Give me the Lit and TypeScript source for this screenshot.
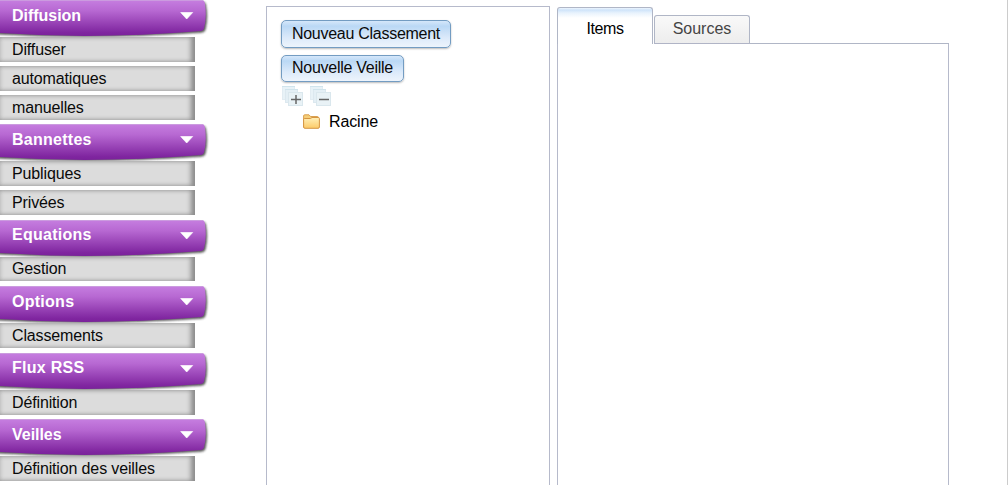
import { LitElement, html, css, svg } from "lit";
import { customElement } from "lit/decorators.js";
import { classMap } from "lit/directives/class-map.js";

interface Section {
  title: string;
  items: string[];
  gap: number;
  raised?: boolean;
  tight?: boolean;
}

const SECTIONS: Section[] = [
  { title: "Diffusion", items: ["Diffuser", "automatiques", "manuelles"], gap: 4, tight: true },
  { title: "Bannettes", items: ["Publiques", "Privées"], gap: 5 },
  { title: "Equations", items: ["Gestion"], gap: 5, raised: true },
  { title: "Options", items: ["Classements"], gap: 5 },
  { title: "Flux RSS", items: ["Définition"], gap: 4, raised: true },
  { title: "Veilles", items: ["Définition des veilles"], gap: 4, tight: true },
];

@customElement("side-menu")
export class SideMenu extends LitElement {
  static styles = css`
    :host { display: block; width: 210px; }
    .head { display: grid; height: 37px; }
    .head > * { grid-area: 1 / 1; }
    .banner { display: block; width: 210px; height: 40px; }
    .title { z-index: 2; padding-left: 12px; font-weight: bold; line-height: 18px; margin-top: 7px; color: #fff; letter-spacing: .27px; }
    .tight .title { letter-spacing: -.03px; }
    .raised .title { margin-top: 6px; }
    .list { display: flex; flex-direction: column; gap: 4px; }
    .item {
      box-sizing: border-box; width: 195px; height: 25px; padding-left: 12px; line-height: 25px;
      background: #dcdcdc; color: #0a0a0a; letter-spacing: -.14px;
      box-shadow: inset -5px 0 5px -1px #8c8c8c, inset 0 0 4px #aaa;
    }
    .short .item { height: 24px; line-height: 23px; }
  `;

  private banner() {
    return svg`<svg class="banner" viewBox="0 0 210 40">
      <defs>
        <linearGradient id="g" x1="0" y1="0" x2="0" y2="1">
          <stop offset="0" stop-color="#c67ee0"></stop>
          <stop offset=".3" stop-color="#b768d2"></stop>
          <stop offset=".9" stop-color="#8026a0"></stop>
          <stop offset="1" stop-color="#7a219b"></stop>
        </linearGradient>
        <filter id="b" x="-5%" y="-20%" width="110%" height="140%"><feGaussianBlur stdDeviation="1"></feGaussianBlur></filter>
      </defs>
      <path d="M-6 2H203Q205.500 2 206 5Q208.500 18 205.500 30Q204.500 32.500 201 32.700Q96 40 -6 34.300Z" fill="#222" opacity=".75" filter="url(#b)"></path>
      <path d="M-1 0H202Q204.500 0 205 4Q207 17 204 28.500Q203.500 30.500 201 31Q96 39.700 -1 33Z" fill="url(#g)"></path>
      <path d="M0 .5H203" stroke="#cb9bdf" fill="none"></path>
      <path d="M180.700 12.500H192.700L186.700 19Z" fill="#fff" stroke="#fff" stroke-opacity=".65" stroke-linejoin="round"></path>
    </svg>`;
  }

  render() {
    return SECTIONS.map(
      (s) => html`<section class=${classMap({ raised: !!s.raised, tight: !!s.tight, short: s.title === "Equations" })}>
        <div class="head">${this.banner()}<span class="title">${s.title}</span></div>
        <div class="list">${s.items.map((i) => html`<div class="item">${i}</div>`)}</div>
        <div style="height:${s.gap}px"></div>
      </section>`,
    );
  }
}

@customElement("watch-tree")
export class WatchTree extends LitElement {
  static styles = css`
    :host {
      display: flex; flex-direction: column; align-items: flex-start; box-sizing: border-box;
      width: 284px; height: 520px; padding: 13px 14px 0; border: 1px solid #b6bacb;
    }
    button {
      box-sizing: border-box; height: 28px; padding: 0; width: 170px; flex: none;
      border: 1px solid #739cc2; border-radius: 5px; font: inherit; color: #0a0a0a; letter-spacing: -.27px;
      background: linear-gradient(#d5e7fa 0, #bad8f5 20%, #dceafa 65%, #edf4fc);
      box-shadow: 0 1px 2px #bbb; white-space: nowrap;
    }
    .second { width: 123px; height: 27px; margin-top: 7px; padding-bottom: 1px; }
    .tools { display: flex; gap: 6px; margin: 4px 0 0 1px; height: 20px; }
    .tools svg { width: 22px; height: 20px; }
    .node { display: flex; margin: 5px 0 0 22px; gap: 9px; line-height: 22px; letter-spacing: -.15px; }
    .folder { width: 17px; height: 16px; margin-top: 3px; }
  `;

  private stack(plus: boolean) {
    return html`<svg viewBox="0 0 22 20">
      <rect x=".5" y=".5" width="12" height="13" fill="#e8f2f7" stroke="#e2ecf2"></rect>
      <path d="M0 .5H13" stroke="#d0e4ec"></path>
      <rect x="3.500" y="3.500" width="12" height="13" fill="#e4eff5" stroke="#dce8ef"></rect>
      <path d="M3 3.500H16" stroke="#d0e4ec"></path>
      <rect x="6.500" y="6.500" width="14" height="13" fill="#e9f2f6" stroke="#dae7ed"></rect>
      <path d="M9 13.500H19" stroke="#666" stroke-width="1.500"></path>
      ${plus ? svg`<path d="M14 9V18" stroke="#666" stroke-width="1.500"></path>` : ""}
    </svg>`;
  }

  render() {
    return html`
      <button>Nouveau Classement</button>
      <button class="second">Nouvelle Veille</button>
      <div class="tools">${this.stack(true)}${this.stack(false)}</div>
      <div class="node">
        <svg class="folder" viewBox="0 0 17 16">
          <defs><linearGradient id="f" x1="0" y1="0" x2="0" y2="1">
            <stop offset="0" stop-color="#fff0b8"></stop><stop offset="1" stop-color="#fcca68"></stop>
          </linearGradient></defs>
          <path d="M.6 13V2Q.6 .8 1.800 .8H6L7.500 2.500H14.500Q15.500 2.500 15.500 4V13Z" fill="#f5ce78" stroke="#d9a050"></path>
          <path d="M.6 5Q.6 4.500 1.500 4.500H7.500L9 3.500H15.300Q16.400 3.500 16.400 4.500V13Q16.400 14.300 15 14.300H2Q.6 14.300 .6 13Z" fill="url(#f)" stroke="#d59543"></path>
        </svg>
        <span>Racine</span>
      </div>`;
  }
}

@customElement("tab-panel")
export class TabPanel extends LitElement {
  static styles = css`
    :host { display: block; width: 392px; }
    .tabs { display: flex; align-items: flex-end; height: 37px; }
    .tab { box-sizing: border-box; width: 96px; text-align: center; border: 1px solid #b0b6c6; border-radius: 3px 3px 0 0; }
    .active {
      height: 37px; line-height: 20px; padding-top: 11px; border-bottom: 0; color: #000; letter-spacing: -.4px;
      background: linear-gradient(#edf5fd 0, #cfe4fa 2px, #e9f3fd 5px, #fff 10px);
    }
    .idle { height: 29px; margin-left: 1px; line-height: 26px; border-bottom-color: #b0b4c6; color: #444; background: linear-gradient(#f9f9f9, #ededed); }
    .rest { flex: 1; border-bottom: 1px solid #b0b6c6; }
    .body { box-sizing: border-box; height: 450px; border: solid #b6bacb; border-width: 0 1px; }
  `;
  render() {
    return html`<div class="tabs">
        <div class="tab active">Items</div>
        <div class="tab idle">Sources</div>
        <div class="rest"></div>
      </div>
      <div class="body"></div>`;
  }
}

@customElement("app-root")
export class AppRoot extends LitElement {
  static styles = css`
    :host {
      display: flex; box-sizing: border-box; width: 1008px; height: 485px; overflow: hidden;
      background: #fff; border-right: 1px solid #ccc; color: #000;
      font: 16px/18px "Liberation Sans", Arial, sans-serif;
    }
    side-menu { flex: none; }
    watch-tree { flex: none; margin: 6px 0 0 56px; }
    tab-panel { flex: none; margin: 7px 0 0 7px; }
  `;
  render() {
    return html`<side-menu></side-menu><watch-tree></watch-tree><tab-panel></tab-panel>`;
  }
}
